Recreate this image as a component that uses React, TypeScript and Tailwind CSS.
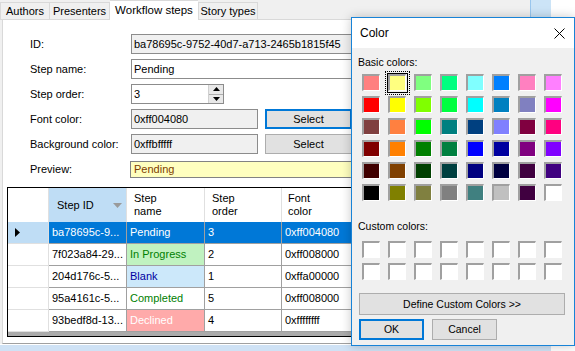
import React from "react";

const basic: string[][] = [
  ["bg-[#ff8080]", "bg-[#ffff80]", "bg-[#80ff80]", "bg-[#00ff80]", "bg-[#80ffff]", "bg-[#0080ff]", "bg-[#ff80c0]", "bg-[#ff80ff]"],
  ["bg-[#ff0000]", "bg-[#ffff00]", "bg-[#80ff00]", "bg-[#00ff40]", "bg-[#00ffff]", "bg-[#0080c0]", "bg-[#8080c0]", "bg-[#ff00ff]"],
  ["bg-[#804040]", "bg-[#ff8040]", "bg-[#00ff00]", "bg-[#008080]", "bg-[#004080]", "bg-[#8080ff]", "bg-[#800040]", "bg-[#ff0080]"],
  ["bg-[#800000]", "bg-[#ff8000]", "bg-[#008000]", "bg-[#008040]", "bg-[#0000ff]", "bg-[#0000a0]", "bg-[#800080]", "bg-[#8000ff]"],
  ["bg-[#400000]", "bg-[#804000]", "bg-[#004000]", "bg-[#004040]", "bg-[#000080]", "bg-[#000040]", "bg-[#400040]", "bg-[#400080]"],
  ["bg-[#000000]", "bg-[#808000]", "bg-[#808040]", "bg-[#808080]", "bg-[#408080]", "bg-[#c0c0c0]", "bg-[#400040]", "bg-[#ffffff]"],
];

type Row = { id: string; name: string; order: string; font: string; sel?: boolean; nameCls: string };
const rows: Row[] = [
  { id: "ba78695c-9...", name: "Pending", order: "3", font: "0xff004080", sel: true, nameCls: "" },
  { id: "7f023a84-29...", name: "In Progress", order: "2", font: "0xff008000", nameCls: "bg-[#c0f2c0] text-[#008000]" },
  { id: "204d176c-5...", name: "Blank", order: "1", font: "0xffa00000", nameCls: "bg-[#cce8fa] text-[#0000a0]" },
  { id: "95a4161c-5...", name: "Completed", order: "5", font: "0xff008000", nameCls: "bg-white text-[#008000]" },
  { id: "93bedf8d-13...", name: "Declined", order: "4", font: "0xffffffff", nameCls: "bg-[#ffaaaa] text-white" },
];

function Swatch({ cls, selected }: { cls: string; selected?: boolean }) {
  return (
    <div className="relative w-[18px] h-[17px] border-t-2 border-l-2 border-b border-r border-t-[#a0a0a0] border-l-[#a0a0a0] border-b-white border-r-white">
      <div className={`w-full h-full ${cls}`} />
      {selected && (
        <>
          <div className="absolute -inset-[3px] border border-black" />
          <div className="absolute -inset-[5px] border border-dotted border-black" />
        </>
      )}
    </div>
  );
}

function Label({ children }: { children: React.ReactNode }) {
  return <div className="w-[101px] shrink-0 flex items-center">{children}</div>;
}

function App() {
  return (
    <div className="relative w-[575px] h-[351px] overflow-hidden bg-white font-['Liberation_Sans',Arial,sans-serif] text-[11px] leading-[13px] text-black">
      {/* main window */}
      <div className="w-[551px] h-full flex flex-col bg-[#f0f0f0]">
        {/* tab strip */}
        <div className="h-[20px] flex items-end">
          <div className="w-[49px] h-[18px] flex items-center justify-center border border-r-0 border-[#d9d9d9] bg-[#f0f0f0]">Authors</div>
          <div className="w-[61px] h-[18px] flex items-center justify-center border border-[#d9d9d9] bg-[#f0f0f0]">Presenters</div>
          <div className="w-[88px] h-[20px] flex items-center justify-center bg-white border-t border-[#d9d9d9] text-[11.5px]">
            Workflow steps
          </div>
          <div className="w-[60px] h-[18px] flex items-center justify-center border border-[#d9d9d9] bg-[#f0f0f0]">
            Story types
          </div>
          <div className="flex-1 self-stretch flex justify-end border-b border-[#d9d9d9]">
            <div className="w-[21px] h-[17px] bg-[#cce4f7] border-l border-[#99c6ee]" />
          </div>
        </div>
        {/* tab page */}
        <div className="flex-1 ml-[2px] bg-white border-l border-b border-[#a0a0a0] border-l-[#d9d9d9] pt-[14px] flex flex-col">
          <div className="pl-[27px] flex flex-col">
            <div className="h-[20px] flex">
              <Label>ID:</Label>
              <div className="w-[240px] h-[20px] bg-[#f0f0f0] border border-[#8c8c8c] pl-[2px] flex items-center">
                ba78695c-9752-40d7-a713-2465b1815f45
              </div>
            </div>
            <div className="h-[20px] mt-[5px] flex">
              <Label>Step name:</Label>
              <div className="w-[240px] h-[20px] bg-white border border-[#8c8c8c] pl-[2px] flex items-center">Pending</div>
            </div>
            <div className="h-[20px] mt-[5px] flex">
              <Label>Step order:</Label>
              <div className="w-[93px] h-[20px] bg-white border border-[#8c8c8c] pl-[2px] flex items-center justify-between">
                <span>3</span>
                <div className="w-[15px] h-full flex flex-col border-l border-[#d0d0d0]">
                  <div className="flex-1 bg-[#e8e8e8] border-b border-[#adadad] flex items-center justify-center">
                    <svg width="7" height="4" viewBox="0 0 7 4"><path d="M3.5 0L7 4H0z" fill="#000" /></svg>
                  </div>
                  <div className="flex-1 bg-[#e8e8e8] flex items-center justify-center">
                    <svg width="7" height="4" viewBox="0 0 7 4"><path d="M0 0H7L3.5 4z" fill="#000" /></svg>
                  </div>
                </div>
              </div>
            </div>
            <div className="h-[20px] mt-[5px] flex">
              <Label>Font color:</Label>
              <div className="w-[127px] h-[20px] bg-[#f0f0f0] border border-[#8c8c8c] pl-[2px] flex items-center">0xff004080</div>
              <div className="ml-[7px] w-[87px] h-[20px] bg-[#e1e1e1] border-2 border-[#0078d7] flex items-center justify-center">Select</div>
            </div>
            <div className="h-[20px] mt-[5px] flex">
              <Label>Background color:</Label>
              <div className="w-[127px] h-[20px] bg-[#f0f0f0] border border-[#8c8c8c] pl-[2px] flex items-center">0xffbfffff</div>
              <div className="ml-[7px] w-[87px] h-[20px] bg-[#e1e1e1] border border-[#adadad] flex items-center justify-center">Select</div>
            </div>
            <div className="h-[17px] mt-[7px] flex">
              <div className="w-[100px] shrink-0 flex items-center">Preview:</div>
              <div className="w-[240px] h-[17px] bg-[#ffffbf] border border-[#828282] pl-[3px] flex items-center text-[#804000]">Pending</div>
            </div>
          </div>
          {/* grid */}
          <div className="ml-[4px] mt-[9px] w-[500px] border border-black bg-[#ababab] flex flex-col">
            <div className="h-[34px] flex bg-white">
              <div className="w-[41px] border-r border-[#e0e0e0]" />
              <div className="w-[78px] bg-[#bfddf5] border-r border-[#e0e0e0] pl-[8px] pr-[4px] flex items-center justify-between">
                <span>Step ID</span>
                <svg width="9" height="5" viewBox="0 0 9 5"><path d="M0 0H9L4.5 5z" fill="#9a9a9a" /></svg>
              </div>
              <div className="w-[78px] border-r border-[#e0e0e0] pl-[7px] flex items-center">Step<br />name</div>
              <div className="w-[77px] border-r border-[#e0e0e0] pl-[7px] flex items-center">Step<br />order</div>
              <div className="w-[77px] border-r border-[#e0e0e0] pl-[6px] flex items-center">Font<br />color</div>
              <div className="flex-1" />
            </div>
            {rows.map((r) => (
              <div key={r.id} className="h-[22px] flex">
                <div className={`w-[41px] border-r border-b border-[#e0e0e0] flex items-center pl-[7px] ${r.sel ? "bg-[#bfddf5]" : "bg-white"}`}>
                  {r.sel && (
                    <svg width="5" height="9" viewBox="0 0 5 9"><path d="M0 0L5 4.5L0 9z" fill="#000" /></svg>
                  )}
                </div>
                <div className={`w-[78px] border-r border-b border-[#a0a0a0] pl-[3px] flex items-center ${r.sel ? "bg-[#0078d7] text-white" : "bg-white"}`}>{r.id}</div>
                <div className={`w-[78px] border-r border-b border-[#a0a0a0] pl-[3px] flex items-center ${r.sel ? "bg-[#0078d7] text-white" : r.nameCls}`}>{r.name}</div>
                <div className={`w-[77px] border-r border-b border-[#a0a0a0] pl-[3px] flex items-center ${r.sel ? "bg-[#0078d7] text-white" : "bg-white"}`}>{r.order}</div>
                <div className={`w-[77px] border-r border-b border-[#a0a0a0] pl-[3px] flex items-center ${r.sel ? "bg-[#0078d7] text-white" : "bg-white"}`}>{r.font}</div>
                <div className={`flex-1 border-b border-[#a0a0a0] ${r.sel ? "bg-[#0078d7]" : "bg-white"}`} />
              </div>
            ))}
            <div className="h-[4px]" />
          </div>
        </div>
        <div className="h-[7px] bg-[#cfe2f5] border-t border-white" />
      </div>

      {/* Color dialog */}
      <div className="absolute left-[351px] top-[17px] w-[224px] h-[329px] border border-[#1883d7] bg-[#f0f0f0] shadow-[0_0_10px_rgba(0,0,0,0.22)] flex flex-col">
        <div className="h-[30px] bg-white flex items-center justify-between pl-[8px] pr-[9px] text-[12px]">
          <span>Color</span>
          <svg width="11" height="11" viewBox="0 0 11 11">
            <path d="M0.5 0.5L10.5 10.5M10.5 0.5L0.5 10.5" stroke="#000" strokeWidth="1" />
          </svg>
        </div>
        <div className="pl-[6px] pt-[8px] flex flex-col text-[10.5px]">
          <div className="h-[13px] flex items-center">Basic colors:</div>
          <div className="ml-[4px] mt-[5px] grid grid-cols-[repeat(8,18px)] gap-x-[8px] gap-y-[5px]">
            {basic.map((row, ri) =>
              row.map((c, ci) => <Swatch key={`${ri}-${ci}`} cls={c} selected={ri === 0 && ci === 1} />)
            )}
          </div>
          <div className="h-[13px] mt-[19px] flex items-center">Custom colors:</div>
          <div className="ml-[4px] mt-[8px] grid grid-cols-[repeat(8,18px)] gap-x-[8px] gap-y-[5px]">
            {Array.from({ length: 16 }).map((_, i) => (
              <Swatch key={i} cls="bg-white" />
            ))}
          </div>
          <div className="ml-[1px] mt-[13px] w-[206px] h-[22px] bg-[#e1e1e1] border border-[#adadad] flex items-center justify-center">
            Define Custom Colors &gt;&gt;
          </div>
          <div className="ml-[1px] mt-[4px] flex gap-[8px]">
            <div className="w-[65px] h-[21px] bg-[#e1e1e1] border-2 border-[#0078d7] flex items-center justify-center">OK</div>
            <div className="w-[65px] h-[21px] bg-[#e1e1e1] border border-[#adadad] flex items-center justify-center">Cancel</div>
          </div>
        </div>
      </div>
    </div>
  );
}

export default App;
